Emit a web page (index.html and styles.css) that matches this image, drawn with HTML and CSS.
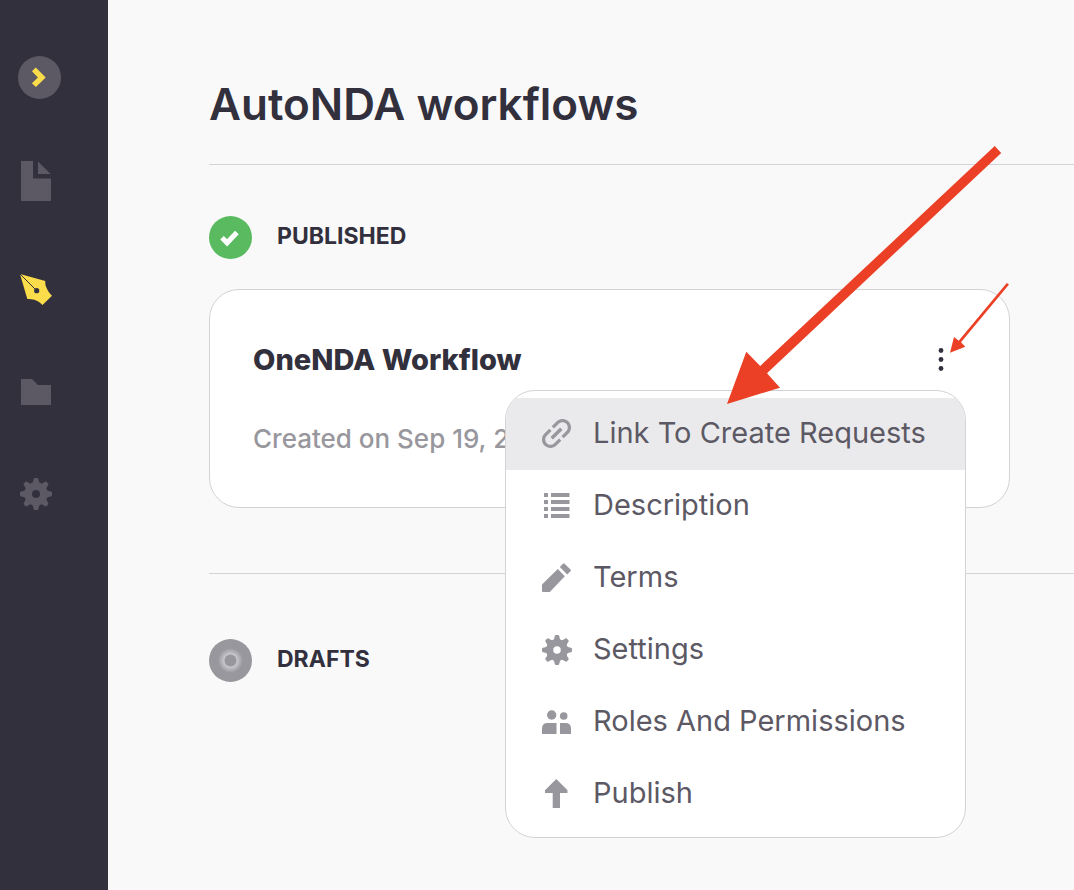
FILE: index.html
```html
<!DOCTYPE html>
<html lang="en">
    <head>
        <meta charset="utf-8">
        <meta name="viewport" content="width=device-width, initial-scale=1">
        <title>AutoNDA workflows</title>
        <link rel="stylesheet" href="styles.css">
    </head>
    <body>
        <!-- Shared icons -->
        <svg class="sprite" aria-hidden="true">
            <symbol id="gear" viewBox="0 0 32 32">
                <circle cx="16" cy="16" r="7.7" fill="none" stroke="currentColor" stroke-width="7.4"/>
                <g fill="currentColor">
                    <path id="tooth" d="M14.4 0h3.2l.8 1 .5 2.6 1.6 2.4h-9l1.6-2.4.5-2.6z"/>
                    <use href="#tooth" transform="rotate(45 16 16)"/>
                    <use href="#tooth" transform="rotate(90 16 16)"/>
                    <use href="#tooth" transform="rotate(135 16 16)"/>
                    <use href="#tooth" transform="rotate(180 16 16)"/>
                    <use href="#tooth" transform="rotate(225 16 16)"/>
                    <use href="#tooth" transform="rotate(270 16 16)"/>
                    <use href="#tooth" transform="rotate(315 16 16)"/>
                </g>
            </symbol>
        </svg>

        <div class="app">
            <aside class="sidebar">
                <button class="toggle" type="button" aria-label="Expand menu">
                    <svg width="43" height="43" viewBox="0 0 43 43"><path d="M14 15.2l3.7-3.6 10 9.8-9.8 9.7-4-3.8 6-5.9z" fill="#fbdc4a"/></svg>
                </button>
                <nav class="side-nav">
                    <a href="#" aria-label="Documents">
                        <svg width="30" height="40" viewBox="0 0 30 40"><path d="M0 0h12v17.5h18V40H0zM17 .5L29.7 13H17z"/></svg>
                    </a>
                    <a class="active" href="#" aria-label="Workflows">
                        <svg width="32" height="32" viewBox="0 0 32 32">
                            <path d="M0 0l25.3 7c-.3 3 .3 5 1.4 7.2 1.2 2.8 3 5.4 5.3 7.5L22.500 31c-2.500-2.400-5-4.200-8-5.200-2.300-.8-4.600-.9-7.200-.9z"/>
                            <path class="nib" d="M0 0l16.500 16.500"/>
                            <circle class="hole" cx="16.7" cy="16.7" r="2.6"/>
                        </svg>
                    </a>
                    <a href="#" aria-label="Folders">
                        <svg width="30" height="26" viewBox="0 0 30 26"><path d="M0 0h11l6 6h13v20H0z"/></svg>
                    </a>
                    <a href="#" aria-label="Settings">
                        <svg width="32" height="32"><use href="#gear"/></svg>
                    </a>
                </nav>
            </aside>

            <main class="content">
                <h1>AutoNDA workflows</h1>

                <section class="group">
                    <div class="group-head">
                        <svg width="43" height="43" viewBox="0 0 43 43">
                            <circle cx="21.5" cy="21.5" r="21.5" fill="#5aba60"/>
                            <path d="M13 21.7l5.1 5.1 9.8-10.300" fill="none" stroke="#fff" stroke-width="5"/>
                        </svg>
                        <h2>PUBLISHED</h2>
                    </div>

                    <article class="card">
                        <div class="card-top">
                            <h3>OneNDA Workflow</h3>
                            <button class="more" type="button" aria-label="More actions">
                                <svg width="6" height="24" viewBox="0 0 6 24"><circle cx="3" cy="2.5" r="2.4"/><circle cx="3" cy="11.5" r="2.4"/><circle cx="3" cy="20.5" r="2.4"/></svg>
                            </button>
                        </div>
                        <p>Created on Sep 19, 2022</p>

                        <div class="menu">
                            <a class="selected" href="#">
                                <svg width="30" height="30" viewBox="0 0 30 30"><path transform="rotate(-45 14.5 14.5) translate(-5.9 -5.9) scale(1.7)" d="M3.9 12c0-1.71 1.39-3.1 3.1-3.1h4V7H7c-2.76 0-5 2.24-5 5s2.24 5 5 5h4v-1.9H7c-1.71 0-3.1-1.39-3.1-3.1zM8 13h8v-2H8v2zm9-6h-4v1.9h4c1.71 0 3.1 1.39 3.1 3.1s-1.39 3.1-3.1 3.1h-4V17h4c2.76 0 5-2.24 5-5s-2.24-5-5-5z"/></svg>
                                <span>Link To Create Requests</span>
                            </a>
                            <a href="#">
                                <svg width="30" height="30" viewBox="0 0 30 30"><path d="M2 2h4v4H2zM9 2h18.500v4H9zM2 9h4v4H2zM9 9h18.500v4H9zM2 16h4v4H2zM9 16h18.500v4H9zM2 23h4v4H2zM9 23h18.500v4H9z"/></svg>
                                <span>Description</span>
                            </a>
                            <a href="#">
                                <svg width="30" height="30" viewBox="0 0 30 30"><path d="M0 21.5L15.8 6l7 7.3L7.8 29H1q-1 0-1-1zM17.8 4l3.2-3.300q.8-.8 1.600 0l5.900 5.900q.8.8 0 1.600L25.200 11.500z"/></svg>
                                <span>Terms</span>
                            </a>
                            <a href="#">
                                <svg width="30" height="30"><use href="#gear"/></svg>
                                <span>Settings</span>
                            </a>
                            <a href="#">
                                <svg width="30" height="30" viewBox="0 0 30 30"><circle cx="9.7" cy="8" r="4.7"/><circle cx="21.7" cy="9" r="3.8"/><path d="M0 27v-5.500Q0 16 5.500 16h9v11zM18 27V16h5.500q5.500 0 5.500 5.500V27z"/></svg>
                                <span>Roles And Permissions</span>
                            </a>
                            <a href="#">
                                <svg width="30" height="30" viewBox="0 0 30 30"><path d="M14.3 0l11.200 11.200v2.800H18v15h-7.300V14H3v-2.800z"/></svg>
                                <span>Publish</span>
                            </a>
                        </div>

                        <!-- Pointers to the menu button and its first item -->
                        <svg class="arrows" width="300" height="270" viewBox="720 140 300 270" aria-hidden="true">
                            <path d="M994.7 146l6.5 7L767 373.3l13 14.4L727 404l19.300-52.300 13.900 14.300z"/>
                            <path d="M1006.8 283l2.200 1.600L961 342.300l4.300 4.400-15.300 6 4-15.700 4.700 3.700z"/>
                        </svg>
                    </article>
                </section>

                <section class="group">
                    <div class="group-head">
                        <svg width="43" height="43" viewBox="0 0 43 43">
                            <radialGradient id="glow">
                                <stop offset=".5" stop-color="#c9c8cb"/>
                                <stop offset="1" stop-color="#98979d"/>
                            </radialGradient>
                            <circle cx="21.5" cy="21.5" r="21.5" fill="#98979d"/>
                            <circle cx="21.5" cy="21.5" r="12.5" fill="url(#glow)"/>
                            <circle cx="21.5" cy="21.5" r="6" fill="#98979d"/>
                        </svg>
                        <h2>DRAFTS</h2>
                    </div>
                </section>
            </main>
        </div>
    </body>
</html>
```
FILE: styles.css
```css
* {
    box-sizing: border-box;
    margin: 0;
}

body {
    font-family: Inter, "Open Sans", sans-serif;
    color: #33303e;
    background-color: #f9f9f9;
}

button {
    display: block;
    padding: 0;
    border: 0;
    background: none;
    cursor: pointer;
}

a {
    text-decoration: none;
}

svg {
    display: block;
    flex-shrink: 0;
}

.sprite {
    position: absolute;
    width: 0;
    height: 0;
}

.app {
    display: flex;
    min-height: 100vh;
}

/* Sidebar */
.sidebar {
    width: 108px;
    flex-shrink: 0;
    padding: 56px 18px;
    background-color: #33303e;
}

.toggle {
    border-radius: 50%;
    background-color: #5c5965;
}

.side-nav {
    display: flex;
    flex-direction: column;
    gap: 73px;
    padding: 62px 2px;
}

.side-nav a {
    display: flex;
    width: 32px;
    justify-content: center;
    color: #5c5965;
}

.side-nav svg {
    fill: currentColor;
}

.side-nav .active {
    color: #fbdc4a;
}

.side-nav .nib {
    stroke: #33303e;
}

.side-nav .hole {
    fill: #33303e;
}

/* Content */
.content {
    flex: 1;
    min-width: 0;
    padding: 76px 0 0 101px;
}

h1 {
    padding-bottom: 32px;
    font-size: 44px;
    line-height: 56px;
    font-weight: 600;
}

.group {
    padding: 51px 64px 65px 0;
    border-top: 1px solid #d3d3d5;
}

.group + .group {
    padding-top: 65px;
}

.group-head {
    display: flex;
    align-items: center;
    gap: 25px;
}

h2 {
    padding-bottom: 3px;
    font-size: 23px;
    line-height: 28px;
    font-weight: 700;
}

.card {
    position: relative;
    margin-top: 30px;
    padding: 50px 43px;
    border: 1px solid #d3d3d5;
    border-radius: 30px;
    background-color: #fff;
}

.card-top {
    display: flex;
    justify-content: space-between;
    align-items: center;
}

h3 {
    font-size: 29px;
    line-height: 40px;
    font-weight: 800;
}

.more {
    padding: 8px 22px;
    fill: #33303e;
}

.card p {
    padding-top: 41px;
    font-size: 26px;
    line-height: 36px;
    font-weight: 500;
    color: #98979d;
}

/* Menu */
.menu {
    position: absolute;
    top: 100px;
    right: 43px;
    width: 461px;
    padding: 7px 0;
    border: 1px solid #d3d3d5;
    border-radius: 30px;
    background-color: #fff;
    overflow: hidden;
}

.menu a {
    display: flex;
    align-items: center;
    gap: 21px;
    height: 72px;
    padding: 0 36px;
    font-size: 29px;
    color: #5c5965;
    white-space: nowrap;
}

.menu .selected {
    background-color: #eaeaec;
}

.menu span {
    padding-bottom: 4px;
}

.menu svg {
    fill: #98979d;
    color: #98979d;
}

.arrows {
    position: absolute;
    top: -150px;
    right: -11px;
    fill: #eb4026;
    pointer-events: none;
}
```
